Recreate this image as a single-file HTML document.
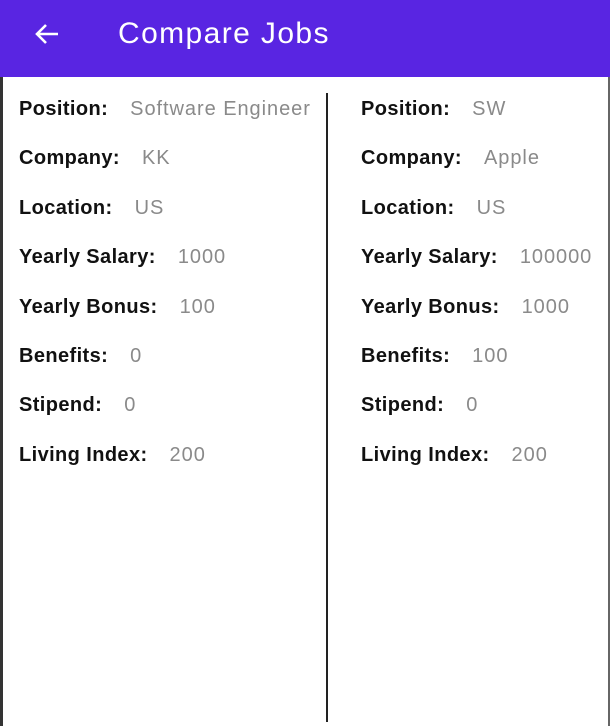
<!DOCTYPE html>
<html><head><meta charset="utf-8"><style>
body{margin:0;width:610px;height:726px;overflow:hidden;background:#fff;font-family:"Liberation Sans",sans-serif;position:relative}
.bar{position:absolute;left:0;top:0;width:610px;height:77px;background:#5925e2}
.title{position:absolute;left:118px;top:17px;color:#fff;font-size:30px;letter-spacing:1.4px}
.lb{position:absolute;left:0;top:77px;width:3px;height:649px;background:#333}
.rb{position:absolute;right:0;top:77px;width:2px;height:649px;background:#666}
.div{position:absolute;left:326px;top:93px;width:2px;height:629px;background:#222}
.col{position:absolute;top:98px}
.row{height:49.4px;font-size:20px;white-space:nowrap}
.row b{color:#111;margin-right:22px;letter-spacing:0.4px}
.row span{color:#8a8a8a;letter-spacing:0.95px}
</style></head><body>
<div class="bar"></div>
<svg style="position:absolute;left:33px;top:20px" width="28" height="28" viewBox="0 0 28 28"><path d="M25 14H4M13 5L4 14L13 23" stroke="#fff" stroke-width="2.6" fill="none"/></svg>
<div class="title">Compare Jobs</div>
<div class="lb"></div><div class="rb"></div><div class="div"></div>
<div class="col" style="left:19px">
<div class="row"><b>Position:</b><span>Software Engineer</span></div>
<div class="row"><b>Company:</b><span>KK</span></div>
<div class="row"><b>Location:</b><span>US</span></div>
<div class="row"><b>Yearly Salary:</b><span>1000</span></div>
<div class="row"><b>Yearly Bonus:</b><span>100</span></div>
<div class="row"><b>Benefits:</b><span>0</span></div>
<div class="row"><b>Stipend:</b><span>0</span></div>
<div class="row"><b>Living Index:</b><span>200</span></div>
</div>
<div class="col" style="left:361px">
<div class="row"><b>Position:</b><span>SW</span></div>
<div class="row"><b>Company:</b><span>Apple</span></div>
<div class="row"><b>Location:</b><span>US</span></div>
<div class="row"><b>Yearly Salary:</b><span>100000</span></div>
<div class="row"><b>Yearly Bonus:</b><span>1000</span></div>
<div class="row"><b>Benefits:</b><span>100</span></div>
<div class="row"><b>Stipend:</b><span>0</span></div>
<div class="row"><b>Living Index:</b><span>200</span></div>
</div>
</body></html>
